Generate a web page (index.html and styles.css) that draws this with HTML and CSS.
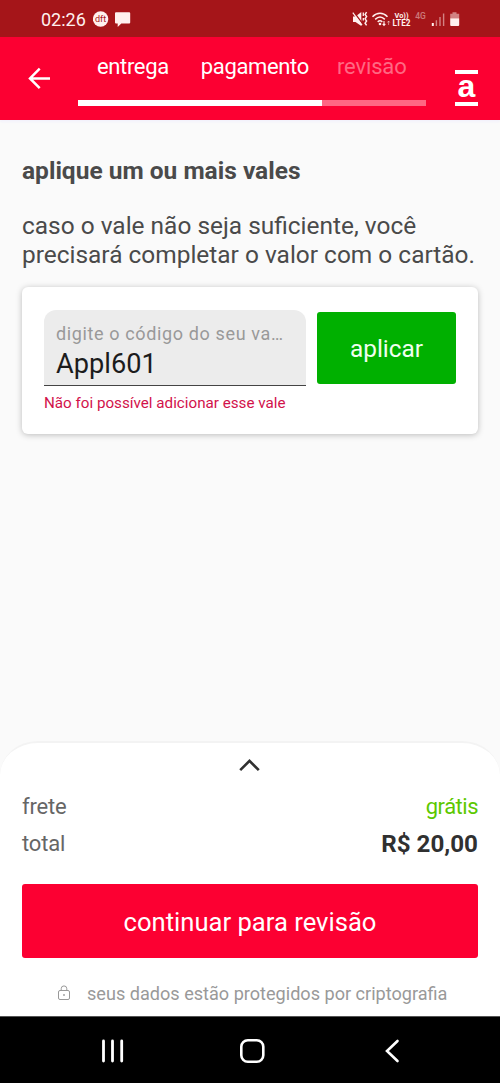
FILE: index.html
```html
<!DOCTYPE html>
<html lang="pt-BR">
<head>
<meta charset="utf-8">
<title>pagamento</title>
<link rel="stylesheet" href="styles.css">
</head>
<body>
<div class="app">
  <div class="status">
    <span class="clock">02:26</span>
    <svg class="status-left" width="42" height="20" viewBox="0 0 42 20">
      <circle cx="7.6" cy="10" r="7.7" fill="#fff0ee"/>
      <text x="7.6" y="13" text-anchor="middle" font-size="9" fill="#a51519" textLength="11">dft</text>
      <path d="M23 3.2h13.2q1 0 1 1v9.300q0 1-1 1H28.300l-3.600 3.500v-3.500H23q-1 0-1-1V4.200q0-1 1-1z" fill="#fff0ee"/>
    </svg>
    <svg class="status-right" width="110" height="20" viewBox="0 0 110 20" fill="none" stroke="#fff0ee">
      <path d="M1 7.500h2.500L9.300 3v14L3.500 13H1z" fill="#fff0ee" stroke="none"/>
      <path d="M1.800 3 10.800 15" stroke="#a51519" stroke-width="1.300"/>
      <path d="M.8 3.600 10 16.200" stroke-width="1.200"/>
      <path d="M11.300 3.500v3.500M11.300 9v2.500" stroke-width="1.300"/>
      <path d="M14.600 3.200l-1.500 2.200 1.500 2.200-1.500 2.200 1.500 2.200-1.500 2.200 1.500 2.200" stroke-width="1.500"/>
      <path d="M20.500 7.700c4.500-4.600 10.500-4.600 15 0M23.200 10.400c3-3 6.600-3 9.600 0M25.700 12.900c1.500-1.400 3.100-1.400 4.600 0" stroke-width="1.500"/>
      <circle cx="28" cy="15" r="1.300" fill="#fff0ee" stroke="none"/>
      <path d="M32 12v4.500M30.700 14.900l1.300 1.600 1.300-1.600" stroke-width="1.100"/>
      <path d="M36.600 16v-4M35.400 13.500l1.200-1.500 1.200 1.500" stroke-width="1" opacity=".5"/>
      <g fill="#fff0ee" stroke="none" font-weight="700">
        <text x="42.500" y="8.800" font-size="8" textLength="14" lengthAdjust="spacingAndGlyphs">Vo))</text>
        <text x="40.500" y="16.900" font-size="9" textLength="18" lengthAdjust="spacingAndGlyphs">LTE2</text>
        <text x="63.300" y="9.500" font-size="8.800" font-weight="500" opacity=".45" textLength="10.500" lengthAdjust="spacingAndGlyphs">4G</text>
      </g>
      <g fill="#fff0ee" stroke="none">
        <path d="M79.800 14h2v3h-2z"/>
        <path d="M83.700 11.300h1.400v5.700h-1.400zM87.300 8h1.400v9h-1.400zM90.900 4.500h1.400V17h-1.400z" opacity=".5"/>
        <path d="M100.500 3.300h4v1.500h2.700v4.500h-9V4.800h2.300z" opacity=".5"/>
        <path d="M98.200 9.300h9V16q0 1-1 1h-7q-1 0-1-1z"/>
      </g>
    </svg>
  </div>

  <header class="header">
    <svg class="back" width="24" height="24" viewBox="0 0 24 24" fill="none" stroke="#fff" stroke-width="2.500"><path d="M23 12.400H2.500M12.700 2.700 3 12.400l9.700 9.700"/></svg>
    <nav class="steps">
      <div class="step-names">
        <span class="step-1">entrega</span>
        <span class="step-2">pagamento</span>
        <span class="step-3">revisão</span>
      </div>
      <div class="track"><div class="track-done"></div></div>
    </nav>
    <div class="logo"><span>a</span></div>
  </header>

  <main class="content">
    <h1>aplique um ou mais vales</h1>
    <p class="intro">caso o vale não seja suficiente, você<br>precisará completar o valor com o cartão.</p>
    <section class="card">
      <div class="field-col">
        <div class="field">
          <span class="label">digite o código do seu va…</span>
          <span class="value">Appl601</span>
        </div>
        <div class="error">Não foi possível adicionar esse vale</div>
      </div>
      <div class="apply"><span>aplicar</span></div>
    </section>
  </main>

  <section class="sheet">
    <svg class="chevron" width="22" height="14" viewBox="0 0 22 14" fill="none" stroke="#303030" stroke-width="2.600"><path d="M1.200 12.200 10.500 2.900l9.300 9.300"/></svg>
    <div class="row"><span class="name">frete</span><span class="free">grátis</span></div>
    <div class="row"><span class="name">total</span><strong>R$ 20,00</strong></div>
    <div class="continue"><span>continuar para revisão</span></div>
    <div class="secure">
      <svg width="14" height="16" viewBox="0 0 14 16" fill="none" stroke="#999" stroke-width="1"><rect x="1.500" y="5.500" width="11" height="9" rx="1.500"/><path d="M4.200 5.500V3.700a2.800 2.800 0 0 1 5.600 0v1.800"/><circle cx="7" cy="10" r=".9" fill="#999" stroke="none"/></svg>
      <span>seus dados estão protegidos por criptografia</span>
    </div>
  </section>

  <div class="navbar">
    <svg width="24" height="24" viewBox="0 0 24 24" stroke="#fff" stroke-width="2.800" stroke-linecap="round"><path d="M2.500 2v20M11.500 2v20M20.700 2v20"/></svg>
    <svg width="26" height="26" viewBox="0 0 26 26" fill="none" stroke="#fff" stroke-width="2.600"><rect x="2.300" y="1.300" width="22" height="21.500" rx="6.500"/></svg>
    <svg width="16" height="24" viewBox="0 0 16 24" fill="none" stroke="#fff" stroke-width="2.600" stroke-linecap="round"><path d="M12.500 2 2 12 12.500 22"/></svg>
  </div>
</div>
</body>
</html>
```

FILE: styles.css
```css
* { box-sizing: border-box; }
body { margin: 0; font-family: Roboto, "Liberation Sans", sans-serif; background: #fafafa; }
span, strong, h1 { white-space: nowrap; }
.app { width: 500px; height: 1083px; display: flex; flex-direction: column; overflow: hidden; }

.status { height: 37px; flex: none; background: #a51519; color: #fff0ee; display: flex; align-items: flex-start; padding: 9px 38px 0 41px; }
.clock { font-size: 18px; line-height: 22px; }
.status-left { margin-left: 7px; }
.status-right { margin-left: auto; }

.header { height: 83px; flex: none; background: #fc0032; color: #fff; display: flex; box-shadow: 0 2px 2px #f3f2fb; }
.back { margin: 29px 0 0 27px; flex: none; }
.steps { margin-left: 27px; width: 348px; }
.step-names { display: flex; padding: 16px 0 0 19px; font-size: 22px; line-height: 28px; height: 63px; letter-spacing: -.35px; }
.step-2 { margin-left: 32px; }
.step-3 { margin-left: 28px; color: #ff6883; letter-spacing: -.15px; }
.track { height: 6px; background: #ff6683; }
.track-done { width: 244px; height: 6px; background: #fff; }
.logo { width: 23px; height: 36px; margin: 33px 0 0 29px; border: solid #fff; border-width: 4px 0; display: flex; justify-content: center; font: bold 32px/25px "Liberation Sans", Arial, sans-serif; }

.content { flex: 1; padding: 37px 22px 0; color: #4a4a4a; }
h1 { margin: 0; font-size: 24.5px; line-height: 28px; font-weight: 700; }
.intro { margin: 27px 0 0; font-size: 24.45px; line-height: 28.5px; white-space: nowrap; }
.card { margin-top: 18px; height: 147px; background: #fff; border-radius: 6px; box-shadow: 0 1px 6px rgba(0,0,0,.25); padding: 22px 22px 0; display: flex; }
.field-col { width: 262px; }
.field { margin-top: 1px; height: 76px; background: #ececec; border-radius: 12px 12px 0 0; border-bottom: 1px solid #444; padding: 13px 12px 0; display: flex; flex-direction: column; }
.label { font-size: 18px; line-height: 22px; letter-spacing: .63px; color: #999; }
.value { margin-top: 2px; font-size: 27.2px; line-height: 34px; color: #1c1c1c; }
.error { margin-top: 7px; font-size: 15.2px; line-height: 20px; color: #d2124b; white-space: nowrap; }
.apply { margin: 3px 0 0 11px; width: 139px; height: 72px; background: #00b000; color: #f0fff0; border-radius: 3px; display: flex; align-items: center; justify-content: center; font-size: 24.4px; }

.sheet { height: 275px; flex: none; background: #fff; border-radius: 38px 38px 0 0 / 34px 34px 0 0; border-top: 2px solid #f3f3f3; padding: 15px 22px 0; color: #666; }
.chevron { display: block; margin: 0 auto 16px; }
.row { height: 37px; display: flex; justify-content: space-between; align-items: center; font-size: 22px; }
.name { letter-spacing: -.2px; }
.free { color: #5cc800; letter-spacing: -.5px; }
.row strong { color: #303030; font-size: 24.2px; }
.continue { margin-top: 22px; height: 74px; background: #fc0032; color: #fff; border-radius: 3px; display: flex; align-items: center; justify-content: center; font-size: 25.6px; padding-top: 1px; }
.secure { margin-top: 25px; padding-left: 35px; display: flex; font-size: 18.1px; line-height: 22px; color: #999; }
.secure svg { margin-top: 2px; }
.secure span { margin-left: 16px; }

.navbar { height: 67px; flex: none; background: #000; border-top: 1px solid #555; display: flex; padding: 22px 0 0 101px; }
.navbar svg:nth-child(2) { margin-left: 114px; }
.navbar svg:nth-child(3) { margin-left: 120px; }
```
